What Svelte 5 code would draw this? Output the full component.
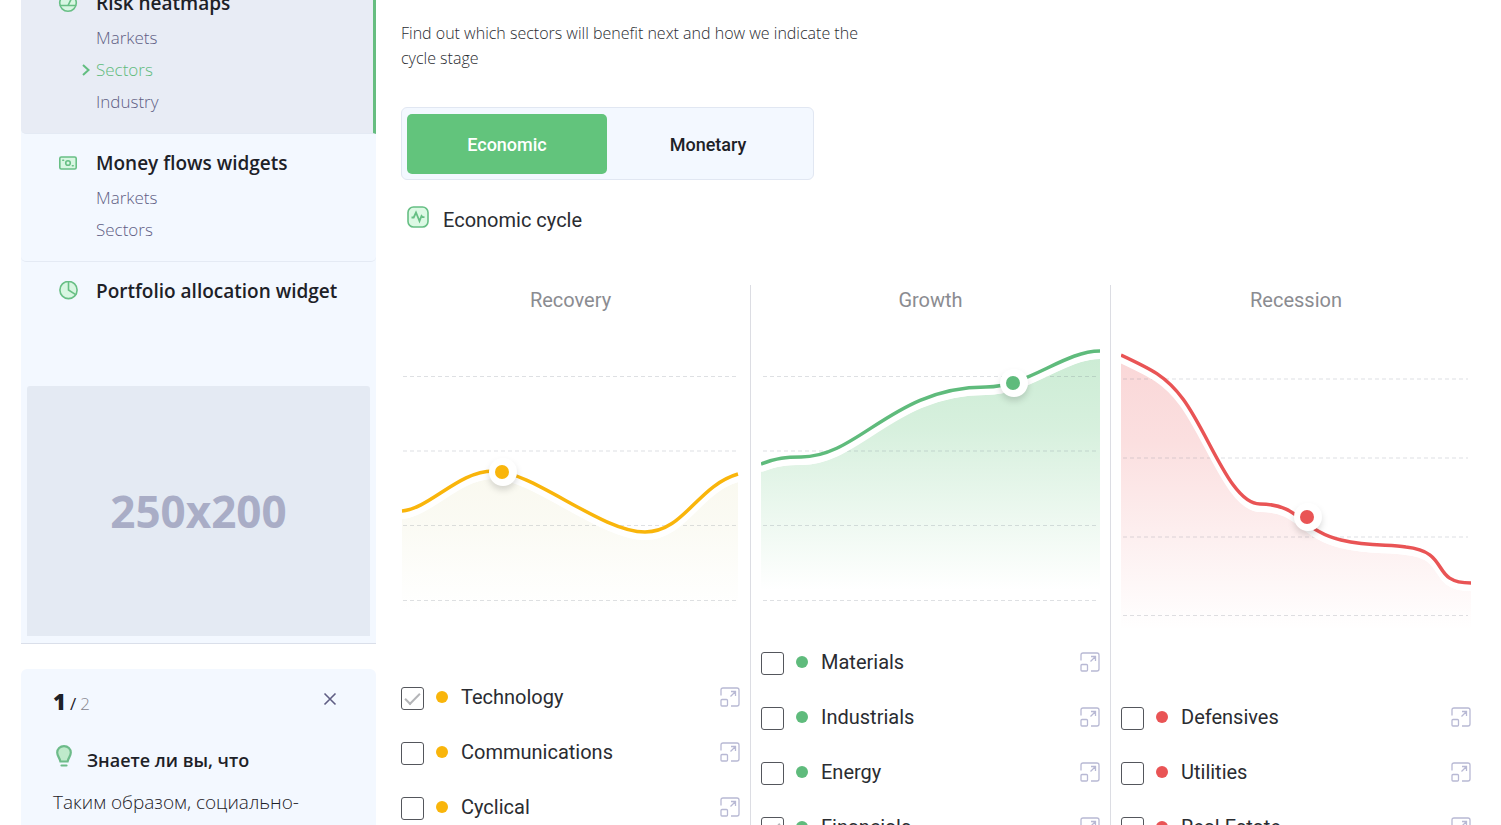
<script lang="ts">
	type Sector = { name: string; checked?: boolean };

	const menu = [
		{ title: 'Risk heatmaps', icon: 'gauge', active: true, links: ['Markets', 'Sectors', 'Industry'] },
		{ title: 'Money flows widgets', icon: 'money', active: false, links: ['Markets', 'Sectors'] },
		{ title: 'Portfolio allocation widget', icon: 'pie', active: false, links: [] }
	];

	const stages = [
		{
			id: 'recovery',
			title: 'Recovery',
			color: '#f9b50b',
			fill: '#f6f5e6',
			fillOpacity: 0.6,
			width: 339,
			height: 290,
			grid: [46.5, 121, 195.5, 270.5],
			line: 'M1 181C28 179 58 141 92 141C132 141 200 202 244 202C283 202 296 156 337 144',
			end: 'V272H1Z',
			dot: { x: 101, y: 142 },
			sectors: [
				{ name: 'Technology', checked: true },
				{ name: 'Communications' },
				{ name: 'Cyclical' }
			] as Sector[]
		},
		{
			id: 'growth',
			title: 'Growth',
			color: '#5fbb7c',
			fill: '#62c47c',
			fillOpacity: 0.32,
			width: 339,
			height: 290,
			grid: [46.5, 121, 195.5, 270.5],
			line: 'M0 134C16 128 25 127 40 127C98 127 132 57 225 57C267 57 303 21 339 21',
			end: 'V252H0Z',
			dot: { x: 252, y: 53 },
			sectors: [
				{ name: 'Materials' },
				{ name: 'Industrials' },
				{ name: 'Energy' },
				{ name: 'Financials', checked: true }
			] as Sector[]
		},
		{
			id: 'recession',
			title: 'Recession',
			color: '#e95455',
			fill: '#ea5a5c',
			fillOpacity: 0.24,
			width: 350,
			height: 300,
			grid: [49, 128, 207, 285.5],
			line: 'M0 25C30 39 45 46 62 69C88 104 110 174 139 174C180 174 180 201 220 210C250 217 268 214 285 217C331 222 308 253 350 253',
			end: 'V292H0Z',
			dot: { x: 186, y: 187 },
			sectors: [{ name: 'Defensives' }, { name: 'Utilities' }, { name: 'Real Estate' }] as Sector[]
		}
	];

	let tab = $state('Economic');
	let tipOpen = $state(true);
</script>

<div class="page">
	<aside class="sidebar">
		<nav class="menu">
			{#each menu as block}
				<section class="block" class:active={block.active}>
					<h3>
						<svg class="menu-icon" width="20" height="20" viewBox="0 0 20 20" aria-hidden="true">
							{#if block.icon === 'gauge'}
								<circle cx="10" cy="10" r="8.3" />
								<path d="M2.5 12.5h15M10 12.5l3-6" />
							{:else if block.icon === 'money'}
								<rect x="1.8" y="4" width="16.4" height="12" rx="1.5" />
								<circle cx="10" cy="10" r="2.3" />
								<path d="M4.8 7.2h.8M14.4 12.8h.8" />
							{:else}
								<circle cx="10.5" cy="9" r="8.6" />
								<path d="M10.5 .5v8.5l7.2 4.6" />
							{/if}
						</svg>
						{block.title}
					</h3>
					{#if block.links.length}
						<ul>
							{#each block.links as link}
								{@const current = block.active && link === 'Sectors'}
								<li class:current>
									<span class="marker">
										{#if current}
											<svg width="8" height="12" viewBox="0 0 8 12" aria-hidden="true">
												<path d="M1 1l5.5 5L1 11" />
											</svg>
										{/if}
									</span>
									<a href="#{link.toLowerCase()}">{link}</a>
								</li>
							{/each}
						</ul>
					{/if}
				</section>
			{/each}
			<div class="banner">250x200</div>
		</nav>

		{#if tipOpen}
			<section class="tip">
				<header>
					<p class="counter"><b>1</b><span>/</span><small>2</small></p>
					<button class="close" aria-label="Close" onclick={() => (tipOpen = false)}>
						<svg width="14" height="14" viewBox="0 0 14 14" aria-hidden="true">
							<path d="M1.5 1.5l11 11M12.5 1.5l-11 11" />
						</svg>
					</button>
				</header>
				<h4>
					<svg width="18" height="24" viewBox="0 0 18 24" aria-hidden="true">
						<path
							d="M9 2.2C5 2.2 2.2 5 2.2 8.6C2.2 12 4.6 13.5 5.4 17.5H12.6C13.4 13.5 15.8 12 15.8 8.6C15.8 5 13 2.2 9 2.2Z"
							fill="#bfeacb"
						/>
						<path d="M6.5 21.5h5" />
					</svg>
					Знаете ли вы, что
				</h4>
				<p class="tip-text">Таким образом, социально-</p>
			</section>
		{/if}
	</aside>

	<main>
		<p class="intro">
			Find out which sectors will benefit next and how we indicate the cycle stage
		</p>

		<div class="tabs" role="tablist">
			{#each ['Economic', 'Monetary'] as name}
				<button role="tab" aria-selected={tab === name} onclick={() => (tab = name)}>{name}</button>
			{/each}
		</div>

		<h2>
			<svg width="22" height="22" viewBox="0 0 22 22" aria-hidden="true">
				<rect x="1" y="1" width="20" height="20" rx="5.5" fill="#dcf9e4" stroke-width="1.6" />
				<path d="M4.5 11.5h2.2L9 6.5l3.5 8.5 2-5 1 1.2h2" stroke-width="1.8" />
			</svg>
			{tab} cycle
		</h2>

		<div class="stages">
			{#each stages as stage}
				<section class="stage {stage.id}">
					<h3>{stage.title}</h3>
					<svg
						class="chart"
						viewBox="0 0 {stage.width} {stage.height}"
						role="img"
						aria-label="{stage.title} chart"
					>
						<defs>
							<linearGradient id="{stage.id}-fill" x1="0" y1="0" x2="0" y2="1">
								<stop offset="0" stop-color={stage.fill} stop-opacity={stage.fillOpacity} />
								<stop offset="0.3" stop-color={stage.fill} stop-opacity={stage.fillOpacity * 0.8} />
								<stop offset="1" stop-color={stage.fill} stop-opacity="0" />
							</linearGradient>
						</defs>
						<path d={stage.line + stage.end} transform="translate(0 8)" fill="url(#{stage.id}-fill)" />
						{#each stage.grid as y}
							<path class="grid-line" d="M2 {y}H{stage.width - 3}" />
						{/each}
						<path class="halo" d={stage.line} transform="translate(0 4)" />
						<path class="line" d={stage.line} stroke={stage.color} />
						<circle class="ring" cx={stage.dot.x + 1} cy={stage.dot.y} r="14" />
						<circle cx={stage.dot.x} cy={stage.dot.y} r="7" fill={stage.color} />
					</svg>
					<ul class="sectors">
						{#each stage.sectors as sector}
							<li>
								<label>
									<input type="checkbox" bind:checked={sector.checked} />
									<svg class="bullet" width="12" height="12" viewBox="0 0 12 12" aria-hidden="true">
										<circle cx="6" cy="6" r="6" fill={stage.color} />
									</svg>
									{sector.name}
								</label>
								<button class="expand" aria-label="Open {sector.name}">
									<svg width="20" height="20" viewBox="0 0 20 20" aria-hidden="true">
										<path
											d="M1 8.5V3Q1 1 3 1H17Q19 1 19 3V17Q19 19 17 19H11M10.5 9.5L15.5 4.5M11 4.5H15.5V9"
										/>
										<rect x="1" y="12.5" width="6.5" height="6.5" rx="1" />
									</svg>
								</button>
							</li>
						{/each}
					</ul>
				</section>
			{/each}
		</div>
	</main>
</div>

<style>
	:global(body) {
		background: #fff;
		color: #1d2127;
		font-family: 'Open Sans', 'Noto Sans', sans-serif;
	}

	.page {
		display: flex;
		gap: 25px;
		height: 100vh;
		padding: 0 30px 0 21px;
		overflow: hidden;
		box-sizing: border-box;
	}

	h2,
	h3,
	h4,
	p,
	ul {
		margin: 0;
		padding: 0;
		list-style: none;
	}

	button {
		border: 0;
		padding: 0;
		background: none;
		cursor: pointer;
	}

	svg {
		fill: none;
		flex: none;
	}

	/* sidebar */
	.sidebar {
		flex: 0 0 355px;
	}

	.menu {
		margin-top: -26px;
		background: #f3f8ff;
		border-bottom: 1px solid #dadfea;
	}

	.block {
		padding: 14px 0 15px;
		border-bottom: 1px solid #e4eaf4;
		border-radius: 5px;
	}

	.block:last-of-type {
		padding-bottom: 80px;
		border-bottom: 0;
	}

	.block.active {
		background: #e8ecf5;
		border-right: 3px solid #66bd80;
		border-radius: 0 0 0 5px;
	}

	.block h3 {
		display: flex;
		align-items: center;
		gap: 18px;
		margin-bottom: 4px;
		padding-left: 37px;
		font-size: 19px;
		font-weight: 600;
		line-height: 30px;
	}

	.block:last-of-type h3 {
		margin-bottom: 0;
	}

	.menu-icon {
		stroke: #68bf85;
		stroke-width: 1.6;
		fill: #d8f6e2;
		stroke-linecap: round;
	}

	.block li {
		display: flex;
		align-items: center;
		padding-left: 61px;
		font-size: 17px;
		font-weight: 300;
		line-height: 32px;
	}

	.marker {
		display: flex;
		width: 14px;
		stroke: #62bd80;
		stroke-width: 2;
	}

	.block a {
		color: #5f5e84;
		text-decoration: none;
	}

	.block .current a {
		color: #5fbb7c;
	}

	.banner {
		display: flex;
		align-items: center;
		justify-content: center;
		height: 250px;
		margin: 0 6px;
		border-bottom: 7px solid #f3f8ff;
		border-radius: 3px;
		background: #e4eaf3;
		color: #a9adc6;
		font-size: 44px;
		font-weight: 700;
	}

	.tip {
		margin-top: 25px;
		padding: 16px 32px;
		border-radius: 6px;
		background: #f3f8ff;
	}

	.tip header {
		display: flex;
		align-items: flex-start;
		justify-content: space-between;
	}

	.counter {
		display: flex;
		align-items: baseline;
		gap: 4px;
		font-size: 17px;
		line-height: 32px;
	}

	.counter b {
		font-size: 22px;
		font-weight: 800;
	}

	.counter small {
		color: #85858d;
		font-size: 17px;
		font-weight: 300;
	}

	.close {
		display: flex;
		margin: 7px 7px 0 0;
		stroke: #5f5e84;
		stroke-width: 1.6;
	}

	.tip h4 {
		display: flex;
		align-items: center;
		gap: 14px;
		margin-top: 24px;
		font-size: 18px;
		font-weight: 600;
		line-height: 32px;
	}

	.tip h4 svg {
		margin: 0 0 8px 2px;
		stroke: #6dbb8a;
		stroke-width: 2.2;
		stroke-linecap: round;
	}

	.tip-text {
		margin-top: 10px;
		font-size: 19px;
		font-weight: 300;
		line-height: 32px;
	}

	/* main column */
	main {
		flex: 1;
		min-width: 0;
		color: #2a2c31;
		font-family: Roboto, 'Open Sans', sans-serif;
	}

	.intro {
		max-width: 480px;
		padding-top: 21px;
		font-family: 'Open Sans', 'Noto Sans', sans-serif;
		font-size: 16px;
		font-weight: 300;
		line-height: 25px;
	}

	.tabs {
		display: inline-flex;
		gap: 1px;
		margin-top: 36px;
		padding: 6px 5px 5px;
		border: 1px solid #e1e7f2;
		border-radius: 6px;
		background: #f3f8ff;
	}

	.tabs button {
		width: 200px;
		height: 60px;
		border-radius: 5px;
		color: #1d2127;
		font-family: inherit;
		font-size: 18px;
		font-weight: 500;
	}

	.tabs button[aria-selected='true'] {
		background: #62c47c;
		color: #fff;
	}

	h2 {
		display: flex;
		align-items: center;
		gap: 14px;
		margin-top: 25px;
		padding-left: 6px;
		font-size: 20px;
		font-weight: 400;
		line-height: 30px;
	}

	h2 svg {
		margin-bottom: 6px;
		stroke: #66bf84;
	}

	.stages {
		display: grid;
		grid-template-columns: 35fr 36fr 36fr;
		margin-top: 50px;
	}

	.stage {
		padding: 0 10px;
		border-right: 1px solid #dcdde3;
	}

	.stage:first-child {
		padding-left: 0;
	}

	.stage:last-child {
		padding-right: 0;
		border-right: 0;
	}

	.stage h3 {
		color: #8b8c91;
		font-size: 20px;
		font-weight: 400;
		line-height: 30px;
		text-align: center;
	}

	.chart {
		display: block;
		width: 100%;
		height: auto;
		margin-top: 15px;
	}

	.grid-line {
		stroke: #6b7280;
		stroke-opacity: 0.22;
		stroke-dasharray: 4 3;
	}

	.halo {
		stroke: #fff;
		stroke-width: 8;
	}

	.line {
		stroke-width: 3.5;
	}

	.ring {
		fill: #fff;
		filter: drop-shadow(0 4px 3px rgb(0 0 0 / 0.14));
	}

	.growth .sectors {
		padding-top: 14px;
	}

	.recovery .sectors {
		padding-top: 49px;
	}

	.recession .sectors {
		padding-top: 59px;
	}

	.sectors li {
		display: flex;
		align-items: center;
		justify-content: space-between;
		height: 55px;
	}

	.sectors label {
		display: flex;
		align-items: center;
		font-size: 20px;
		line-height: 30px;
	}

	.bullet {
		margin: 0 13px 0 12px;
	}

	.sectors input {
		appearance: none;
		width: 23px;
		height: 23px;
		margin: 3px 0 0;
		border: 1px solid #54565c;
		border-radius: 3px;
		background: #fff;
	}

	.sectors input:checked::after {
		content: '';
		display: block;
		width: 13px;
		height: 6px;
		margin: 5px 0 0 3px;
		border: solid #b4b5b8;
		border-width: 0 0 2px 2px;
		transform: rotate(-45deg);
	}

	.expand {
		display: flex;
	}

	.expand svg {
		stroke: #b8b9d4;
		stroke-width: 1.3;
	}
</style>
